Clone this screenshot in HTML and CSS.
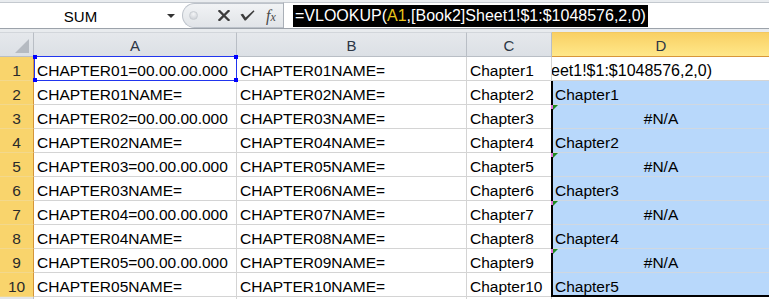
FILE: index.html
```html
<!DOCTYPE html>
<html>
<head>
<meta charset="utf-8">
<link rel="stylesheet" href="styles.css">
</head>
<body>
<div class="fbar">
  <div class="left">
    <div class="namebox"><span class="name">SUM</span><span class="dd"></span></div>
    <div class="btns">
      <span class="dot"></span>
      <svg class="ic icx" width="12" height="11" viewBox="0 0 12 11"><path d="M1.5 1 L10.5 10 M10.5 1 L1.5 10" stroke="#3c3c3c" stroke-width="2.3" stroke-linecap="square" fill="none"/></svg>
      <svg class="ic icv" width="15" height="11" viewBox="0 0 15 11"><path d="M0.5 4.5 L3 3.8 L5.6 7.4 L13.6 0.3 L14.5 1.2 L5.8 10.6 L4.6 10.6 Z" fill="#3c3c3c"/></svg>
      <span class="fx"><i>f</i><i class="xx">x</i></span>
    </div>
  </div>
  <div class="finput"><span class="hl">=VLOOKUP(<span class="ref">A1</span>,[Book2]Sheet1!$1:$1048576,2,0)</span></div>
</div>
<div class="band"></div>
<div class="sheet">
  <div class="corner"><span class="tri"></span></div>
  <div class="ch">A</div>
  <div class="ch">B</div>
  <div class="ch">C</div>
  <div class="chd">D</div>

  <div class="rh">1</div><div class="c">CHAPTER01=00.00.00.000</div><div class="c">CHAPTER01NAME=</div><div class="c">Chapter1</div><div class="c edit"><span class="clip">eet1!$1:$1048576,2,0)</span></div>
  <div class="rh">2</div><div class="c">CHAPTER01NAME=</div><div class="c">CHAPTER02NAME=</div><div class="c">Chapter2</div><div class="c d">Chapter1</div>
  <div class="rh">3</div><div class="c">CHAPTER02=00.00.00.000</div><div class="c">CHAPTER03NAME=</div><div class="c">Chapter3</div><div class="c d na">#N/A</div>
  <div class="rh">4</div><div class="c">CHAPTER02NAME=</div><div class="c">CHAPTER04NAME=</div><div class="c">Chapter4</div><div class="c d">Chapter2</div>
  <div class="rh">5</div><div class="c">CHAPTER03=00.00.00.000</div><div class="c">CHAPTER05NAME=</div><div class="c">Chapter5</div><div class="c d na">#N/A</div>
  <div class="rh">6</div><div class="c">CHAPTER03NAME=</div><div class="c">CHAPTER06NAME=</div><div class="c">Chapter6</div><div class="c d">Chapter3</div>
  <div class="rh">7</div><div class="c">CHAPTER04=00.00.00.000</div><div class="c">CHAPTER07NAME=</div><div class="c">Chapter7</div><div class="c d na">#N/A</div>
  <div class="rh">8</div><div class="c">CHAPTER04NAME=</div><div class="c">CHAPTER08NAME=</div><div class="c">Chapter8</div><div class="c d">Chapter4</div>
  <div class="rh">9</div><div class="c">CHAPTER05=00.00.00.000</div><div class="c">CHAPTER09NAME=</div><div class="c">Chapter9</div><div class="c d na">#N/A</div>
  <div class="rh">10</div><div class="c">CHAPTER05NAME=</div><div class="c">CHAPTER10NAME=</div><div class="c">Chapter10</div><div class="c d">Chapter5</div>
  <div class="rhoff"></div><div class="c"></div><div class="c"></div><div class="c"></div><div class="c"></div>

  <div class="refbox"><i class="h tl"></i><i class="h tr"></i><i class="h bl"></i><i class="h br"></i></div>
  <div class="selbox"></div>
</div>
</body>
</html>
```
FILE: styles.css
```css
body {
  margin: 0;
  width: 769px;
  height: 299px;
  overflow: hidden;
  background: #fff;
  font-family: "Liberation Sans", Arial, sans-serif;
}

.fbar {
  display: flex;
  height: 29px;
  box-sizing: border-box;
  padding-top: 2px;
  background: #e9ecef;
  border-bottom: 1px solid #9ca2aa;
}

.left {
  display: flex;
  background: #fff;
  border-top: 1px solid #c4c9cf;
}

.namebox {
  width: 182px;
  display: flex;
  align-items: center;
}

.name {
  width: 161px;
  text-align: center;
  font-size: 15px;
  color: #000;
  padding-top: 1px;
}

.dd {
  width: 0;
  height: 0;
  margin-left: 6px;
  border-left: 4px solid transparent;
  border-right: 4px solid transparent;
  border-top: 4px solid #333;
}

.btns {
  width: 101px;
  box-sizing: border-box;
  background: linear-gradient(#f1f3f5, #e1e4e8);
  border: 1px solid #bcc2ca;
  border-right: none;
  border-radius: 13px 0 0 13px;
  display: flex;
  align-items: center;
}

.dot {
  width: 9px;
  height: 9px;
  margin-left: 6px;
  border-radius: 50%;
  background: radial-gradient(circle at 50% 30%, #f4f5f7, #c7cbd1);
  border: 1px solid #c9cdd2;
  box-sizing: border-box;
}

.ic { display: block; }
.icx { margin-left: 20px; }
.icv { margin-left: 10px; }

.fx {
  margin-left: 11px;
  font-family: "Liberation Serif", serif;
  font-size: 16px;
  color: #4a4a4a;
  font-style: italic;
  line-height: 1;
}
.fx i { font-style: italic; }
.fx .xx { font-size: 12px; }

.finput {
  flex: 1;
  background: #fff;
  border-top: 1px solid #c4c9cf;
  border-left: 1px solid #a9afb7;
  padding-left: 9px;
}

.hl {
  display: inline-block;
  margin-top: 2px;
  height: 22px;
  line-height: 22px;
  padding: 0 2px;
  background: #000;
  color: #fff;
  font-size: 16px;
}

.ref { color: #e9c51b; }

.band {
  height: 3px;
  background: #e8ebee;
}

.sheet {
  position: relative;
  display: grid;
  grid-template-columns: 34px 203px 230px 85px 218px;
  grid-template-rows: 25px;
  grid-auto-rows: 24px;
}

.corner, .ch, .chd {
  box-sizing: border-box;
  border-top: 1px solid #d2d6db;
  border-right: 1px solid #b9bec5;
  border-bottom: 1px solid #b9bec5;
}

.corner, .ch {
  background: linear-gradient(#e5e8ec, #dce0e5);
}

.corner { position: relative; }
.tri {
  position: absolute;
  right: 4px;
  bottom: 3px;
  width: 0;
  height: 0;
  border-left: 14px solid transparent;
  border-bottom: 14px solid #b5bac1;
}

.ch, .chd {
  text-align: center;
  font-size: 15px;
  color: #2c3645;
  padding-top: 4px;
  line-height: 18px;
}

.chd {
  background: linear-gradient(#f9d064, #ffe88a);
  border-top-color: #f3c860;
  border-bottom: 1px solid #d8963a;
  border-right: none;
}

.rh, .rhoff {
  box-sizing: border-box;
  text-align: center;
  font-size: 15.5px;
  color: #2a2a2a;
  padding-top: 4px;
  line-height: 19px;
}

.rh {
  background: #f9d46c;
  border-right: 1px solid #d4953a;
  border-bottom: 1px solid #f3d88c;
}

.rhoff {
  background: #e3e6ea;
  border-right: 1px solid #b9bec5;
}

.c {
  box-sizing: border-box;
  position: relative;
  border-right: 1px solid #d4d4d4;
  border-bottom: 1px solid #d4d4d4;
  padding: 4px 0 0 3px;
  line-height: 19px;
  font-size: 15.5px;
  color: #000;
  white-space: nowrap;
  overflow: hidden;
}

.c.d {
  background-color: #b8d8fb;
  border-bottom-color: #d0d8e1;
  border-right: none;
}

.c.na {
  text-align: center;
  padding-left: 0;
  overflow: visible;
}

.c.na::before {
  content: "";
  position: absolute;
  left: 1px;
  top: 0;
  width: 0;
  height: 0;
  border-top: 5px solid #1e8a1e;
  border-right: 5px solid transparent;
}

.c.na::after {
  content: "";
  position: absolute;
  left: -1px;
  top: 0;
  width: 2px;
  height: 4px;
  background: #e070d8;
  z-index: 3;
}

.c.edit {
  border-right: none;
  font-size: 16px;
}

.clip {
  display: inline-block;
  margin-left: -4px;
}

.refbox {
  position: absolute;
  grid-column: 2 / 3;
  grid-row: 2 / 3;
  top: -1px;
  left: 0;
  right: 0;
  bottom: 0;
  border: 1px solid #2135ee;
  z-index: 2;
}

.refbox .h {
  position: absolute;
  width: 4px;
  height: 4px;
  background: #0000ff;
}
.refbox .tl { left: -2px; top: -2px; }
.refbox .tr { right: -2px; top: -2px; }
.refbox .bl { left: -2px; bottom: -2px; }
.refbox .br { right: -2px; bottom: -2px; }

.selbox {
  position: absolute;
  grid-column: 5 / 6;
  grid-row: 3 / 12;
  top: 0;
  left: -1px;
  right: -2px;
  bottom: 0;
  border-left: 2px solid #000;
  border-bottom: 2px solid #000;
  border-right: 2px solid #000;
  z-index: 2;
}
```
